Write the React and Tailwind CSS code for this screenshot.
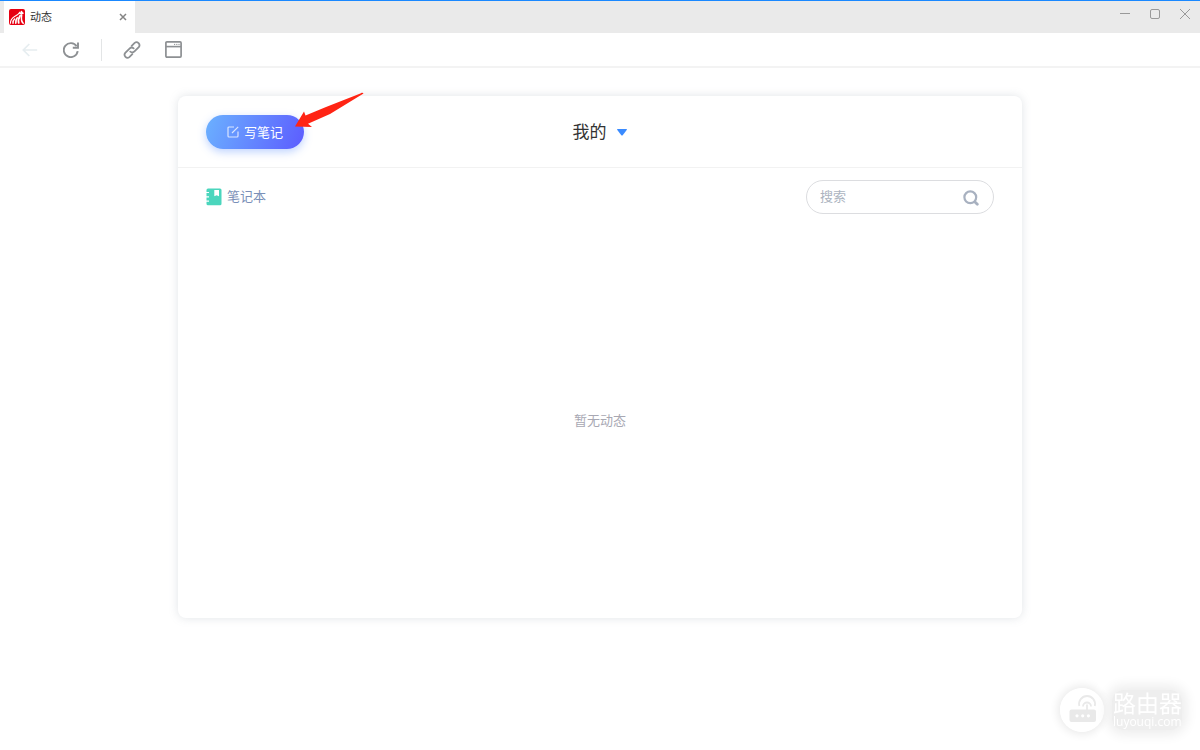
import React from "react";

function TabLogo() {
  return (
    <svg viewBox="0 0 16 16" className="size-4 shrink-0" aria-hidden="true">
      <rect width="16" height="16" rx="2" fill="#e60012" />
      <g fill="none" stroke="#fff" strokeLinecap="round">
        <path d="M1.400 14.200C1.500 11 3 8.800 6 7.200 8.600 5.900 10 4.600 10.800 3.200" strokeWidth="1.100" />
        <path d="M4 14.200C3.900 12.300 4.500 10.900 5.600 10" strokeWidth="1.400" />
        <path d="M6.800 14.200C6.500 11.900 7.100 10.200 8.300 8.800" strokeWidth="1.600" />
        <path d="M9.700 13.900C9 11.500 9.500 9.400 11.100 6.800" strokeWidth="1.800" />
        <path d="M14.200 14.200C12.500 12.600 12.100 10 12.600 7" strokeWidth="1.500" />
        <path d="M10.800 4.300 13.800 4.200M12.500 2.600V6.200" strokeWidth="1.700" />
      </g>
    </svg>
  );
}

function TitleBar() {
  return (
    <header className="flex h-[33px] items-stretch justify-between border-t border-[#1a88ff] bg-[#eaeaea] pl-1">
      <div className="flex w-[131px] items-center bg-white pl-[5px] pr-2">
        <TabLogo />
        <span className="ml-[5px] flex-1 pb-0.5 text-[11px] leading-4 text-[#333]">动态</span>
        <button type="button" aria-label="关闭标签页" className="flex size-2 items-center justify-center">
          <svg viewBox="0 0 8 8" className="size-2" stroke="#858585" strokeWidth="1.500" aria-hidden="true">
            <path d="M1 1 7 7M7 1 1 7" />
          </svg>
        </button>
      </div>
      <div className="flex items-start gap-5 pr-[10px] pt-2 text-[#999]">
        <button type="button" aria-label="最小化" className="size-[10px]">
          <svg viewBox="0 0 10 10" className="size-[10px]" stroke="currentColor" aria-hidden="true">
            <path d="M0 4.500H10" />
          </svg>
        </button>
        <button type="button" aria-label="最大化" className="size-[10px]">
          <svg viewBox="0 0 10 10" className="size-[10px]" fill="none" stroke="currentColor" aria-hidden="true">
            <rect x="0.500" y="0.500" width="9" height="9" rx="1.500" />
          </svg>
        </button>
        <button type="button" aria-label="关闭窗口" className="size-[10px]">
          <svg viewBox="0 0 10 10" className="size-[10px]" stroke="currentColor" aria-hidden="true">
            <path d="M0 0 10 10M10 0 0 10" />
          </svg>
        </button>
      </div>
    </header>
  );
}

function Toolbar() {
  return (
    <nav aria-label="工具栏" className="flex h-[35px] items-center border-b-2 border-[#f3f3f3] bg-white pl-[22px] text-[#8d9093]">
      <button type="button" aria-label="后退" disabled className="text-[#e6edf0]">
        <svg viewBox="0 0 16 16" className="size-4" fill="none" stroke="currentColor" strokeWidth="1.700" aria-hidden="true">
          <path d="M15.200 8H1.500M7.300 2 1.300 8 7.300 14" />
        </svg>
      </button>
      <button type="button" aria-label="刷新" className="ml-[25px]">
        <svg viewBox="0 0 16 16" className="size-4" fill="none" stroke="currentColor" strokeWidth="1.900" aria-hidden="true">
          <path d="M14.700 9.200A7 7 0 1 1 13.600 4.200" />
          <path d="M15 0.500V5.700H9.800" />
        </svg>
      </button>
      <span className="ml-[22px] h-[22px] w-px bg-[#e3e5e6]" />
      <button type="button" aria-label="复制链接" className="ml-[21px]">
        <svg viewBox="0 0 24 24" className="size-[18px]" fill="none" stroke="currentColor" strokeWidth="2.400" strokeLinecap="round" aria-hidden="true">
          <path d="M9.800 14.200C11.400 15.600 13.700 15.500 15.300 13.900L21 8.200A4 4 0 0 0 15.500 2.500L11.600 6.400" />
          <path d="M14.200 9.800C12.600 8.400 10.300 8.500 8.700 10.100L3 15.800A4 4 0 0 0 8.500 21.500L12.400 17.600" />
        </svg>
      </button>
      <button type="button" aria-label="在浏览器中打开" className="ml-6">
        <svg viewBox="0 0 17 17" className="size-[17px]" fill="none" stroke="currentColor" aria-hidden="true">
          <rect x="0.900" y="0.900" width="15.200" height="15.200" rx="1" strokeWidth="1.700" />
          <path d="M1 5.600H16" strokeWidth="1.600" />
          <path d="M9 3.400h1.200M11.200 3.400h1.200M13.400 3.400h1.200" strokeWidth="1" />
        </svg>
      </button>
    </nav>
  );
}

function PointerArrow() {
  return (
    <svg viewBox="0 0 70 38" className="pointer-events-none absolute -top-[23px] left-[88px] h-[38px] w-[70px]" aria-hidden="true">
      <path d="M69.500 1.500C69 .7 68 .7 67 1.200L32 15 11.500 23.500 10 19.500 1 34.500 18 35 14 31.700 36 22Z" fill="#ff2414" />
    </svg>
  );
}

function NotesCard() {
  return (
    <section className="flex min-h-[522px] w-[844px] max-w-full flex-col rounded-lg bg-white shadow-[0_0_10px_rgba(120,130,145,0.220)]">
      <div className="grid h-[72px] grid-cols-3 items-center border-b border-[#f2f2f2] px-7">
        <div className="relative w-fit">
          <button
            type="button"
            className="flex h-[34px] w-[98px] items-center justify-center gap-[5px] rounded-full bg-linear-[110deg] from-[#6bb1ff] to-[#5c5cff] text-[13px] text-white shadow-[0_3px_8px_rgba(70,130,255,0.350)]"
          >
            <svg viewBox="0 0 12 12" className="size-3" fill="none" stroke="#fff" strokeOpacity="0.750" aria-hidden="true">
              <path d="M7 1H2A1 1 0 0 0 1 2V10A1 1 0 0 0 2 11H10A1 1 0 0 0 11 10V5.500M5 7 11.200.9" strokeWidth="1.200" />
            </svg>
            写笔记
          </button>
          <PointerArrow />
        </div>
        <button type="button" aria-haspopup="listbox" className="flex items-center gap-[11px] justify-self-center pb-0.5 text-[17px] leading-6 text-[#333]">
          我的
          <svg viewBox="0 0 10 7" className="mt-1 h-[7px] w-[10px]" fill="#3a8bff" aria-hidden="true">
            <path d="M0.500 0H9.500Q10.300.1 9.700.9L5.700 6.200Q5 7 4.300 6.200L.3.900Q-.3.100.500 0Z" />
          </svg>
        </button>
      </div>
      <div className="flex items-center justify-between px-7 pt-3">
        <a href="#notebooks" className="flex items-center gap-[5px] text-[13px] leading-5 text-[#7a90b8]">
          <svg viewBox="0 0 16 18" className="h-[18px] w-4" aria-hidden="true">
            <path d="M2 .5H14A1.500 1.500 0 0 1 15.500 2V15.700A1.500 1.500 0 0 1 14 17.200H2A1.500 1.500 0 0 1 .5 15.700V2A1.500 1.500 0 0 1 2 .5Z" fill="#4bd6bd" />
            <path d="M0 4.500H3M0 8.800H3M0 13.100H3" stroke="#fff" strokeWidth="1.200" />
            <path d="M8.300 2H13V8.300L10.650 7.300 8.300 8.300Z" fill="#fff" />
          </svg>
          <span className="pb-0.5">笔记本</span>
        </a>
        <div role="search" className="flex h-[34px] w-[188px] items-center rounded-full border border-[#dcdde0] bg-white pl-[13px] pr-[14px]">
          <input
            type="search"
            aria-label="搜索"
            placeholder="搜索"
            className="h-6 min-w-0 flex-1 bg-transparent pb-1 text-[13px] text-[#333] outline-none placeholder:text-[#acb4bf]"
          />
          <svg viewBox="0 0 16 16" className="mt-0.5 size-4 shrink-0" fill="none" stroke="#a8b1c0" strokeLinecap="round" aria-hidden="true">
            <circle cx="7.300" cy="7.300" r="5.900" strokeWidth="2.200" />
            <path d="M12 12 14.300 14.300" strokeWidth="2.800" />
          </svg>
        </div>
      </div>
      <p className="flex flex-1 items-center justify-center pt-2 text-[13px] leading-5 text-[#a8a8b3]">暂无动态</p>
    </section>
  );
}

function SiteMark() {
  return (
    <a href="#home" className="fixed bottom-[18px] right-[18px] flex items-center gap-2 text-white">
      <svg viewBox="0 0 44 44" className="size-11 rounded-full shadow-[0_0_10px_2px_rgba(0,0,0,0.090)]" fill="none" aria-hidden="true">
        <circle cx="22" cy="22" r="22" fill="#fff" />
        <rect x="9.500" y="21.500" width="26.500" height="12.500" rx="2" fill="#e9e9e9" />
        <g stroke="#e9e9e9" strokeWidth="1.800">
          <path d="M19.300 18A8 8 0 1 1 34.800 18" />
          <path d="M23 18.500A4 4 0 1 1 31 18.500" />
          <path d="M27 16.500V22" />
        </g>
        <g fill="#fff">
          <circle cx="17" cy="27.800" r="1.600" />
          <circle cx="22.700" cy="27.800" r="1.600" />
          <circle cx="28.400" cy="27.800" r="1.600" />
        </g>
      </svg>
      <span className="flex flex-col rounded-xl bg-[#eeeeee] pl-px shadow-[0_0_12px_5px_#eeeeee]">
        <span className="text-[23px] leading-6">路由器</span>
        <span className="font-['Open_Sans','Noto_Sans',sans-serif] text-[12px] leading-4">luyouqi.com</span>
      </span>
    </a>
  );
}

export default function App() {
  return (
    <div className="flex min-h-screen flex-col bg-white font-['Noto_Sans_CJK_SC',sans-serif]">
      <TitleBar />
      <Toolbar />
      <main className="flex flex-1 justify-center pb-16 pt-7">
        <div>
          <NotesCard />
        </div>
      </main>
      <SiteMark />
    </div>
  );
}
